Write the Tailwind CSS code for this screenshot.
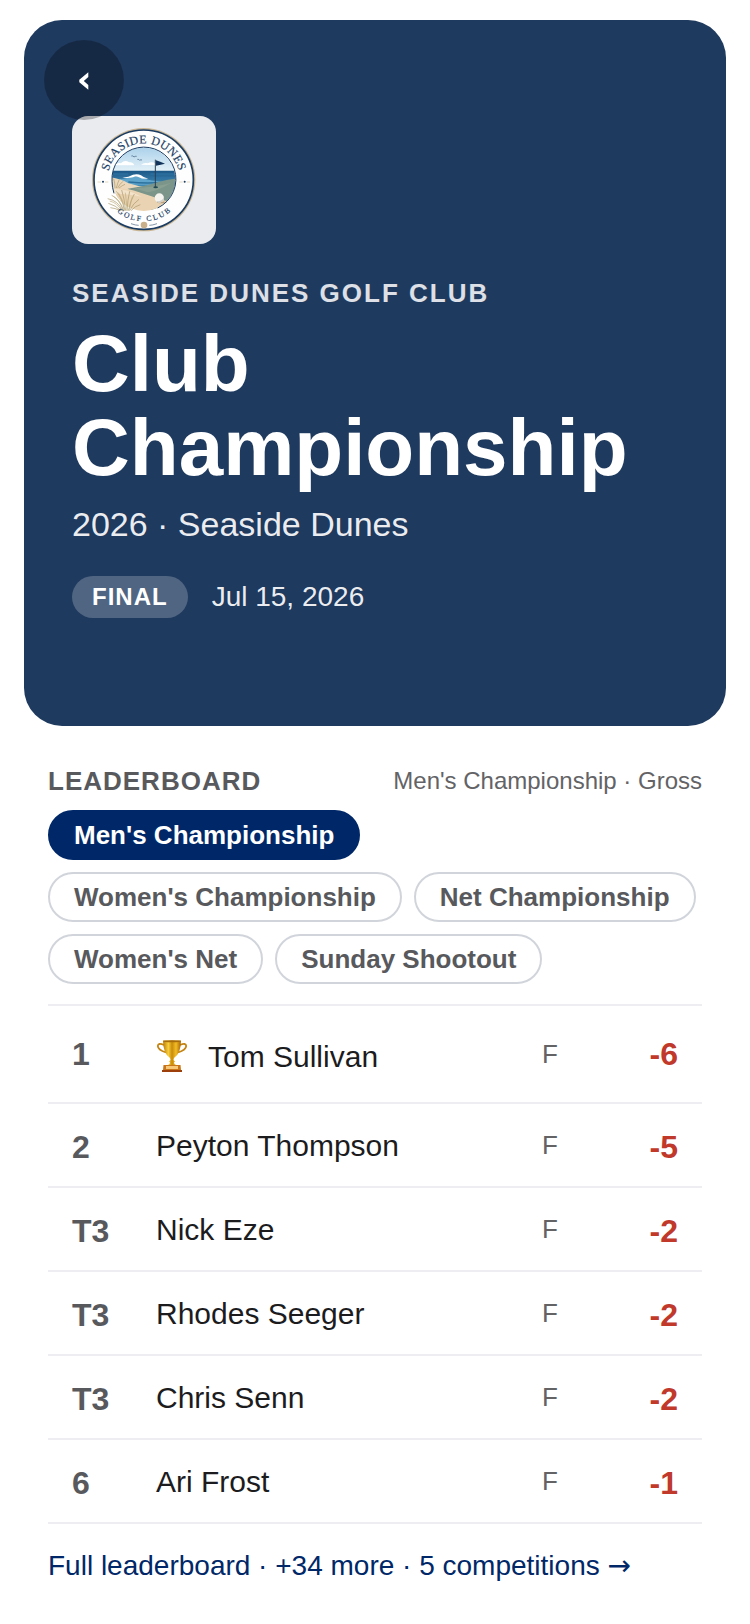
<!DOCTYPE html>
<html lang="en">
<head>
    <meta charset="UTF-8">
    <meta name="viewport" content="width=device-width, initial-scale=1.0">
    <title>Club Championship</title>
    <script src="https://cdn.jsdelivr.net/npm/@tailwindcss/browser@4"></script>
</head>
<body class="bg-white font-['Liberation_Sans',Arial,sans-serif] text-[#1c1c1e]">
    <!-- Hero card -->
    <header class="relative mx-6 mt-5 rounded-[38px] bg-[#1f3a5f] px-12 pt-24 pb-27 text-white">
        <button type="button" aria-label="Back" class="absolute top-5 left-5 z-10 flex size-20 items-center justify-center rounded-full bg-black/28">
            <svg class="h-5 w-[10px]" viewBox="0 -2 10 20" fill="#fff" aria-hidden="true">
                <path d="M9.300 .3v4.600L4.800 9l4.500 4.100v4.600L.3 10.200V7.800z"/>
            </svg>
        </button>

        <div class="h-32 w-36 overflow-hidden rounded-2xl bg-[#e9ebef]">
            <svg class="h-full w-full" viewBox="-39 -12 432 384" role="img" aria-label="Seaside Dunes Golf Club">
                <defs>
                    <clipPath id="scene"><circle cx="176" cy="178" r="95"/></clipPath>
                    <linearGradient id="sky" x1="0" y1="0" x2="0" y2="1">
                        <stop offset="0" stop-color="#a9d0ea"/>
                        <stop offset="1" stop-color="#e6f2f8"/>
                    </linearGradient>
                    <linearGradient id="sea" x1="0" y1="0" x2="0" y2="1">
                        <stop offset="0" stop-color="#1c5787"/>
                        <stop offset="1" stop-color="#4f9cc4"/>
                    </linearGradient>
                    <path id="topArc" d="M68 178a108 108 0 0 1 216 0"/>
                    <path id="bottomArc" d="M50 178a126 126 0 0 0 252 0"/>
                </defs>
                <circle cx="176" cy="179" r="155" fill="#c9b491"/>
                <circle cx="176" cy="179" r="149" fill="#fefefe" stroke="#1b3d63" stroke-width="5"/>
                <g clip-path="url(#scene)">
                    <path fill="url(#sky)" d="M78 80h200v76H78z"/>
                    <path fill="#fff" d="M88 136q10-10 20-6q12-12 24-3q12-2 16 9zM168 134q10-7 20-4q12-7 22 0q12-2 16 6z"/>
                    <path fill="url(#sea)" d="M78 152h200v60H78z"/>
                    <path fill="none" stroke="#2f77a6" stroke-width="3" d="M80 162h50M196 162h80M200 174h70"/>
                    <path fill="#5fa5cb" d="M80 178q40 0 56-6q20-6 40 2q20 10 60 10v10H80z"/>
                    <path fill="#fff" d="M112 173q20-2 32-9q14-4 24 2q8 8 22 10q-18 2-28-4q-10-5-18 0q-14 4-32 1z"/>
                    <path fill="none" stroke="#2c719d" stroke-width="4" d="M130 186q60 6 110 0"/>
                    <path fill="#ecd9bd" d="M78 172q30 4 52 18q30 10 60 12l-20 60H78z"/>
                    <path fill="#7b958a" d="M128 206q54-8 92-20q26-8 60-11v106h-70z"/>
                    <path fill="#899f92" d="M148 205q60-3 110-16q-40 24-70 28z"/>
                    <path fill="#ead3b2" d="M78 204q46-2 82 12q38 12 66 22q24 8 40 10l-30 30H70z"/>
                    <path fill="#f3e3cb" d="M78 206q50 0 92 24q-40-10-92-9z"/>
                    <path fill="#fefefe" d="M70 262q50 14 140 10l10 10H70z"/>
                </g>
                <path d="M87 220Q81 202 81 184A96 96 0 1 1 218 264" fill="none" stroke="#1b3d63" stroke-width="3"/>
                <!-- dune grass -->
                <g fill="none" stroke="#a99768" stroke-width="2">
                    <path d="M112 272Q100 242 68 236M116 272Q104 236 80 226M118 272Q112 234 94 214M122 272Q118 234 110 210M126 272Q128 238 134 214M130 272Q136 242 148 222M134 272Q144 250 162 238M108 272Q92 256 70 250M106 272Q90 264 76 263M138 272Q150 258 166 254"/>
                    <path d="M90 204Q90 188 86 176M94 204Q98 188 103 178M98 204Q104 192 114 184M102 204Q112 196 120 193"/>
                </g>
                <g fill="none" stroke="#c0ad7c" stroke-width="2">
                    <path d="M114 272Q106 244 86 230M120 272Q116 240 100 218M126 272Q124 240 121 218M132 272Q138 246 142 230M110 272Q96 248 74 243"/>
                </g>
                <!-- birds -->
                <path d="M139 108q5-2 8 3q3-3 8-2M157 118q5-1 7 3q3-3 7-1" fill="none" stroke="#3a5a78" stroke-width="2"/>
                <!-- flag and ball -->
                <ellipse cx="212" cy="202" rx="7" ry="3" fill="#1f4a52"/>
                <path d="M211 119v83" stroke="#2b4054" stroke-width="3"/>
                <path fill="#12335a" d="M213 121q12 4 27 10q-12 3-27 6z"/>
                <ellipse cx="228" cy="247" rx="12" ry="3" fill="#b79d78"/>
                <circle cx="223" cy="234" r="14" fill="#f4f3f0"/>
                <path d="M213 244a14 14 0 0 0 23-14q-2 14-23 14" fill="#cfcdc8"/>
                <g fill="#1b3d63" stroke="#1b3d63" stroke-width=".5" font-family="'Liberation Serif', serif">
                    <text font-size="36" letter-spacing="1" text-anchor="middle"><textPath href="#topArc" startOffset="50%">SEASIDE DUNES</textPath></text>
                    <text font-size="23" letter-spacing="6" text-anchor="middle"><textPath href="#bottomArc" startOffset="51%">GOLF CLUB</textPath></text>
                </g>
                <circle cx="54" cy="185" r="3" fill="#1b3d63"/>
                <circle cx="299" cy="185" r="3" fill="#1b3d63"/>
                <path d="M38 186h10M60 186h10M283 186h10M305 186h10" stroke="#d9c8a8" stroke-width="2"/>
                <circle cx="177" cy="315" r="10" fill="#c9b08a"/>
                <path d="M138 311q14 5 23 5M216 311q-14 5-23 5" fill="none" stroke="#44607e" stroke-width="2"/>
            </svg>
        </div>

        <p class="mt-8 text-[26px] leading-[34px] font-bold tracking-[2px] text-white/85">SEASIDE DUNES GOLF CLUB</p>
        <h1 class="mt-3 text-[80px] leading-[84px] font-bold">Club Championship</h1>
        <p class="mt-3.5 text-[34px] leading-10 text-white/92">2026 · Seaside Dunes</p>
        <div class="mt-8 flex items-center gap-6">
            <span class="rounded-full bg-white/22 px-5 py-1 text-2xl leading-[34px] font-bold tracking-[1px]">FINAL</span>
            <time datetime="2026-07-15" class="text-[28px] leading-[42px] text-white/92">Jul 15, 2026</time>
        </div>
    </header>

    <!-- Leaderboard -->
    <main class="mx-12 mt-10">
        <div class="flex items-center justify-between">
            <h2 class="text-[26px] leading-[30px] font-bold tracking-[1px] text-[#58595d]">LEADERBOARD</h2>
            <p class="text-2xl leading-[30px] text-[#636366]">Men's Championship · Gross</p>
        </div>

        <div class="mt-3.5 flex flex-wrap gap-3 text-[26px] leading-[30px] font-bold text-[#58595d]">
            <button type="button" class="rounded-full border-2 border-[#002868] bg-[#002868] px-6 py-2 text-white">Men's Championship</button>
            <button type="button" class="rounded-full border-2 border-[#d1d5db] px-6 py-2">Women's Championship</button>
            <button type="button" class="rounded-full border-2 border-[#d1d5db] px-6 py-2">Net Championship</button>
            <button type="button" class="rounded-full border-2 border-[#d1d5db] px-6 py-2">Women's Net</button>
            <button type="button" class="rounded-full border-2 border-[#d1d5db] px-6 py-2">Sunday Shootout</button>
        </div>

        <table class="mt-5 w-full border-separate border-spacing-0 border-t-2 border-[#ededf2] text-left [&_td]:border-b-2 [&_td]:border-[#ededf2] [&_th]:border-b-2 [&_th]:border-[#ededf2]">
            <tbody>
                <tr class="h-[98px]">
                    <th scope="row" class="w-[108px] pl-6 text-[32px] font-bold text-[#58595d]">1</th>
                    <td class="pt-1 text-[30px]">
                        <div class="flex items-center gap-5">
                            <svg class="size-8" viewBox="0 0 32 32" role="img" aria-label="Winner">
                                <defs>
                                    <linearGradient id="gold" x1="0" x2="1">
                                        <stop offset="0" stop-color="#b97a08"/>
                                        <stop offset=".3" stop-color="#f8cf3a"/>
                                        <stop offset=".5" stop-color="#c98a0c"/>
                                        <stop offset=".72" stop-color="#f2bd25"/>
                                        <stop offset="1" stop-color="#a86404"/>
                                    </linearGradient>
                                </defs>
                                <path d="M8 5Q2 2.500 1.800 6Q2 10 10 12.500M24 5q6-2.500 6.200 1q-.2 4-8.200 6.500" fill="none" stroke="#c48412" stroke-width="1.800"/>
                                <path fill="url(#gold)" d="M7 .5h18q0 13-7 17.500l-.5 2 1.500 1.500-1 1 .5 1.500 3 2h-11l3-2 .5-1.500-1-1 1.500-1.500-.5-2Q7 13.500 7 .5z"/>
                                <ellipse cx="16" cy="1.200" rx="9" ry="1" fill="#a66b0a"/>
                                <path fill="#c9761a" d="M7.500 25h17l.5 5H7z"/>
                                <path fill="#f6c878" d="M10 26h12v3H10z"/>
                                <path fill="#9c3f0b" d="M6 30h20v2H6z"/>
                            </svg>
                            <span>Tom Sullivan</span>
                        </div>
                    </td>
                    <td class="w-16 text-[26px] text-[#636366]">F</td>
                    <td class="w-24 pr-6 text-right text-[32px] font-bold text-[#c0392b]">-6</td>
                </tr>
                <tr class="h-21">
                    <th scope="row" class="pt-1 pl-6 text-[32px] font-bold text-[#58595d]">2</th>
                    <td class="text-[30px]">Peyton Thompson</td>
                    <td class="text-[26px] text-[#636366]">F</td>
                    <td class="pt-1 pr-6 text-right text-[32px] font-bold text-[#c0392b]">-5</td>
                </tr>
                <tr class="h-21">
                    <th scope="row" class="pt-1 pl-6 text-[32px] font-bold text-[#58595d]">T3</th>
                    <td class="text-[30px]">Nick Eze</td>
                    <td class="text-[26px] text-[#636366]">F</td>
                    <td class="pt-1 pr-6 text-right text-[32px] font-bold text-[#c0392b]">-2</td>
                </tr>
                <tr class="h-21">
                    <th scope="row" class="pt-1 pl-6 text-[32px] font-bold text-[#58595d]">T3</th>
                    <td class="text-[30px]">Rhodes Seeger</td>
                    <td class="text-[26px] text-[#636366]">F</td>
                    <td class="pt-1 pr-6 text-right text-[32px] font-bold text-[#c0392b]">-2</td>
                </tr>
                <tr class="h-21">
                    <th scope="row" class="pt-1 pl-6 text-[32px] font-bold text-[#58595d]">T3</th>
                    <td class="text-[30px]">Chris Senn</td>
                    <td class="text-[26px] text-[#636366]">F</td>
                    <td class="pt-1 pr-6 text-right text-[32px] font-bold text-[#c0392b]">-2</td>
                </tr>
                <tr class="h-21">
                    <th scope="row" class="pt-1 pl-6 text-[32px] font-bold text-[#58595d]">6</th>
                    <td class="text-[30px]">Ari Frost</td>
                    <td class="text-[26px] text-[#636366]">F</td>
                    <td class="pt-1 pr-6 text-right text-[32px] font-bold text-[#c0392b]">-1</td>
                </tr>
            </tbody>
        </table>

        <a href="#" class="mt-6 mb-10 block text-[28px] leading-9 text-[#002868]">Full leaderboard · +34 more · 5 competitions <span class="font-['DejaVu_Sans',sans-serif]">→</span></a>
    </main>
</body>
</html>
